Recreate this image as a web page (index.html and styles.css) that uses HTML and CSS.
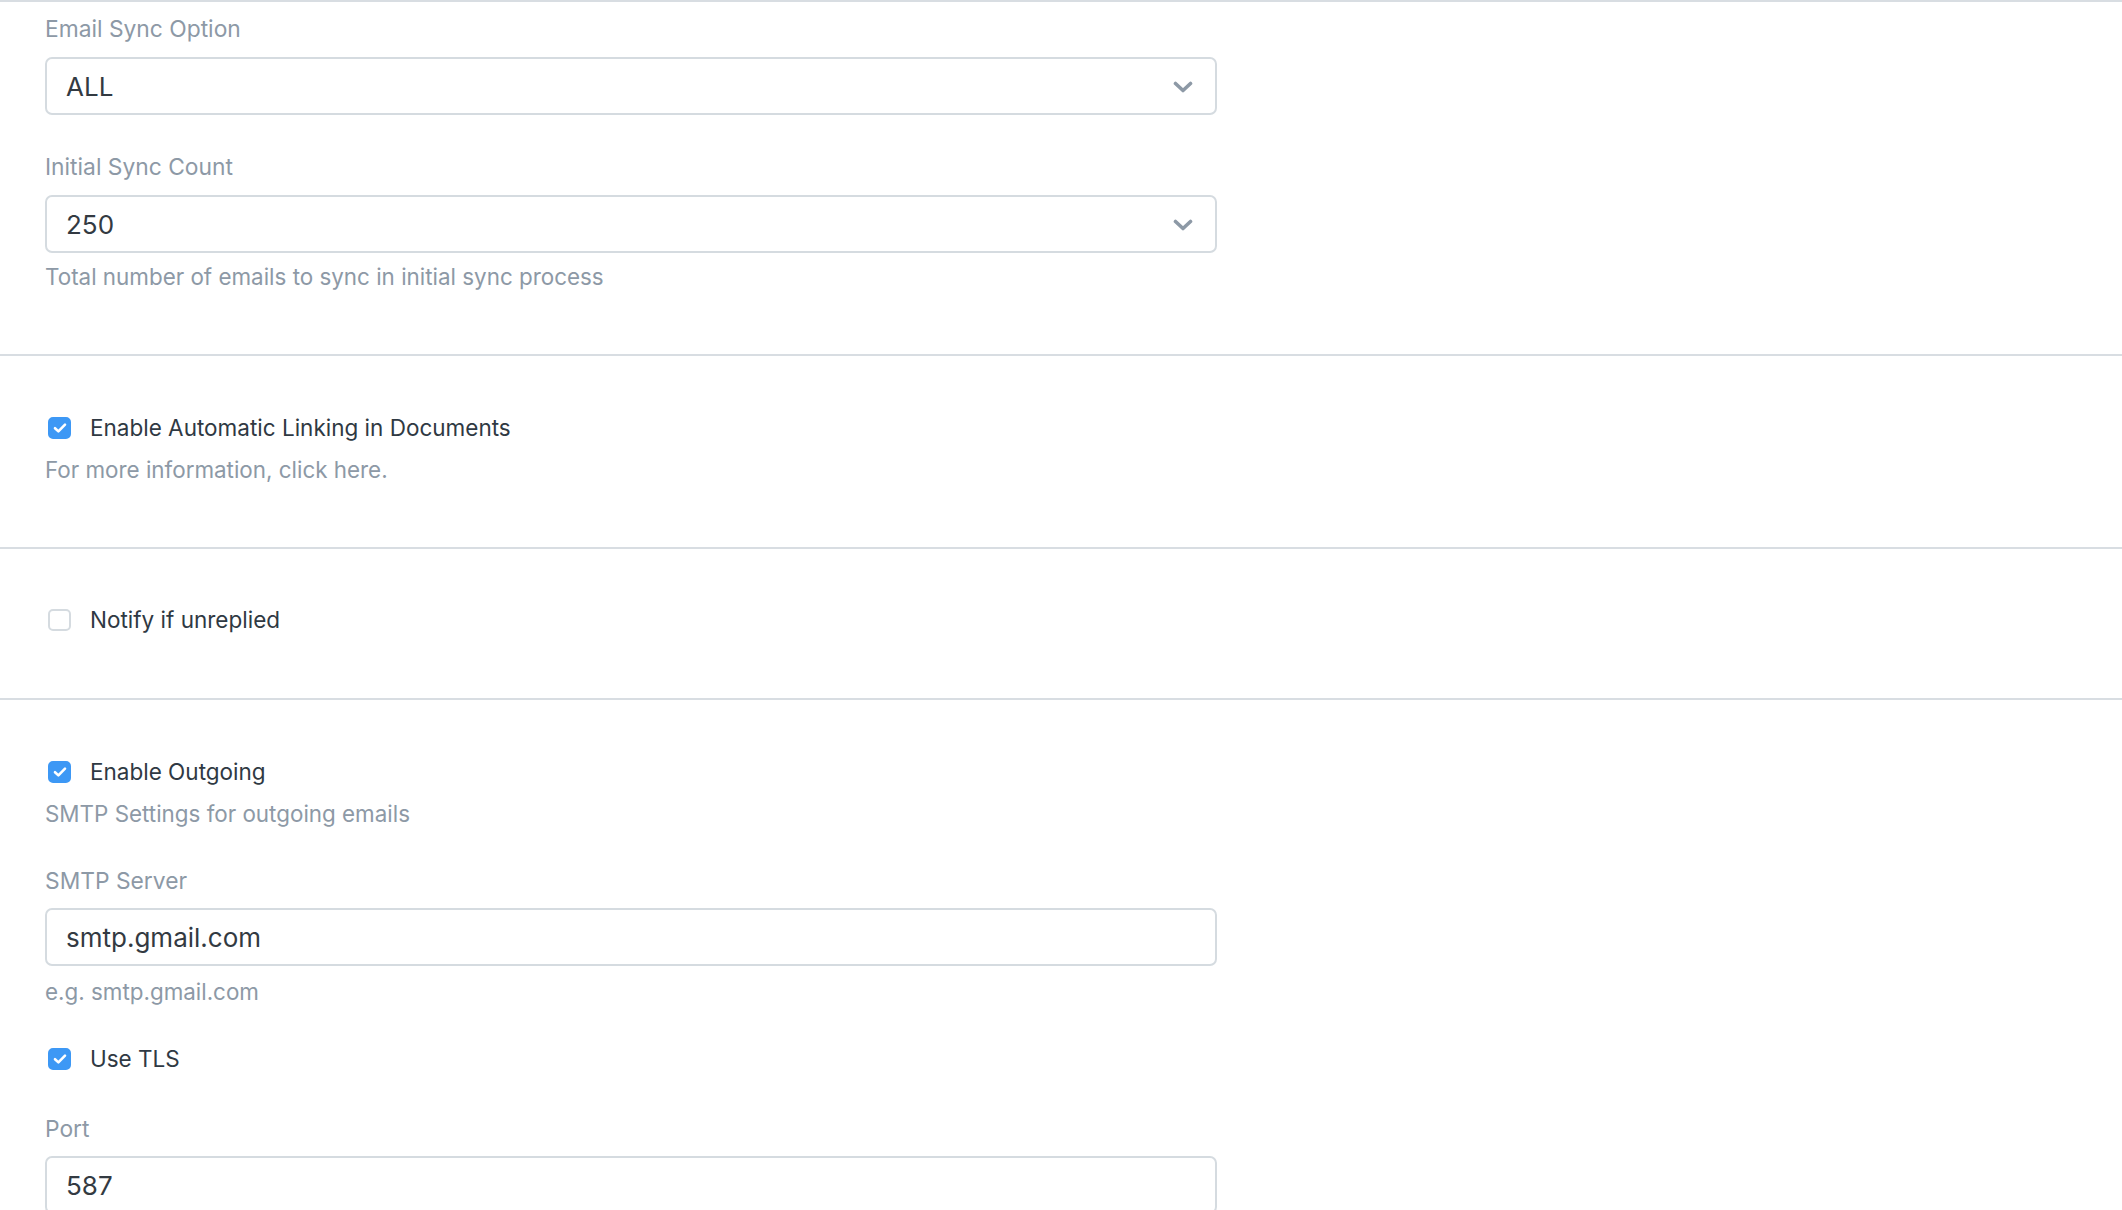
FILE: index.html
```html
<!DOCTYPE html>
<html lang="en">
<head>
  <meta charset="UTF-8">
  <meta name="viewport" content="width=device-width, initial-scale=1.0">
  <title>Email Account</title>
  <link rel="stylesheet" href="styles.css">
</head>
<body>
  <div class="section section-first">
    <div class="field">
      <label class="field-label" for="syncOption">Email Sync Option</label>
      <div class="select-wrap">
        <select id="syncOption" class="control">
          <option>ALL</option>
          <option>UNSEEN</option>
        </select>
        <svg class="chevron" width="20" height="12" viewBox="0 0 20 12"><path d="M2.5 2.5 L10 9.5 L17.5 2.5" fill="none" stroke="#8d99a6" stroke-width="3.6" stroke-linecap="round" stroke-linejoin="round"/></svg>
      </div>
    </div>
    <div class="field">
      <label class="field-label" for="syncCount">Initial Sync Count</label>
      <div class="select-wrap">
        <select id="syncCount" class="control">
          <option>250</option>
          <option>500</option>
        </select>
        <svg class="chevron" width="20" height="12" viewBox="0 0 20 12"><path d="M2.5 2.5 L10 9.5 L17.5 2.5" fill="none" stroke="#8d99a6" stroke-width="3.6" stroke-linecap="round" stroke-linejoin="round"/></svg>
      </div>
      <p class="help">Total number of emails to sync in initial sync process</p>
    </div>
  </div>

  <div class="section">
    <div class="check-row">
      <span class="check-box checked"><svg width="14" height="12" viewBox="0 0 14 12"><path d="M2 6.2 L5.4 9.4 L12 2.6" fill="none" stroke="#fff" stroke-width="2.6" stroke-linecap="round" stroke-linejoin="round"/></svg></span>
      <span class="check-label">Enable Automatic Linking in Documents</span>
    </div>
    <p class="help">For more information, click here.</p>
  </div>

  <div class="section section-short">
    <div class="check-row">
      <span class="check-box"></span>
      <span class="check-label">Notify if unreplied</span>
    </div>
  </div>

  <div class="section">
    <div class="check-row">
      <span class="check-box checked"><svg width="14" height="12" viewBox="0 0 14 12"><path d="M2 6.2 L5.4 9.4 L12 2.6" fill="none" stroke="#fff" stroke-width="2.6" stroke-linecap="round" stroke-linejoin="round"/></svg></span>
      <span class="check-label">Enable Outgoing</span>
    </div>
    <p class="help">SMTP Settings for outgoing emails</p>

    <div class="field field-gap">
      <label class="field-label" for="smtpServer">SMTP Server</label>
      <input id="smtpServer" class="control" type="text" value="smtp.gmail.com">
      <p class="help">e.g. smtp.gmail.com</p>
    </div>

    <div class="check-row tls-row">
      <span class="check-box checked"><svg width="14" height="12" viewBox="0 0 14 12"><path d="M2 6.2 L5.4 9.4 L12 2.6" fill="none" stroke="#fff" stroke-width="2.6" stroke-linecap="round" stroke-linejoin="round"/></svg></span>
      <span class="check-label">Use TLS</span>
    </div>

    <div class="field port-field">
      <label class="field-label" for="port">Port</label>
      <input id="port" class="control" type="text" value="587">
    </div>
  </div>
</body>
</html>
```

FILE: styles.css
```css
body { margin: 0; background: #fff; font-family: Inter, "Noto Sans", sans-serif; font-size: 22.4px; line-height: 32px; color: #36414c; }

.section { border-top: 2px solid #d8dde2; padding: 56px 0 61px 45px; }
.section-first { padding-top: 11px; }
.section-short { padding-top: 55px; padding-bottom: 62px; }

.field { width: 1172px; }
.field + .field { margin-top: 36px; }
.field-gap { margin-top: 35px; }
.port-field { margin-top: 38px; }

.field-label { display: block; color: #8d99a6; font-size: 22.8px; margin-bottom: 12px; }
.field-gap .field-label { margin-bottom: 11px; }
.port-field .field-label { margin-bottom: 11px; }

.control { display: block; width: 100%; height: 58px; box-sizing: border-box; padding: 0 19px; border: 2px solid #d5dbe0; border-radius: 7px; background: #fff; font-family: Inter, "Noto Sans", sans-serif; font-size: 26px; color: #333a42; outline: none; }
select.control { appearance: none; -webkit-appearance: none; padding-right: 60px; }

.select-wrap { position: relative; }
.chevron { position: absolute; right: 24px; top: 24px; pointer-events: none; }

.help { margin: 8px 0 0; color: #8d99a6; }
.section .check-row + .help { margin-top: 10px; }
.field-gap .help { margin-top: 10px; }

.check-row { display: flex; align-items: center; gap: 19px; padding-left: 3px; }
.tls-row { margin-top: 35px; }
.check-box { width: 23px; height: 22px; box-sizing: border-box; border: 2px solid #d5dbe0; border-radius: 5px; display: flex; align-items: center; justify-content: center; flex-shrink: 0; }
.check-box.checked { background: #3d98f5; border-color: #3d98f5; }
.check-label { color: #2f3943; font-size: 22.5px; }
```
